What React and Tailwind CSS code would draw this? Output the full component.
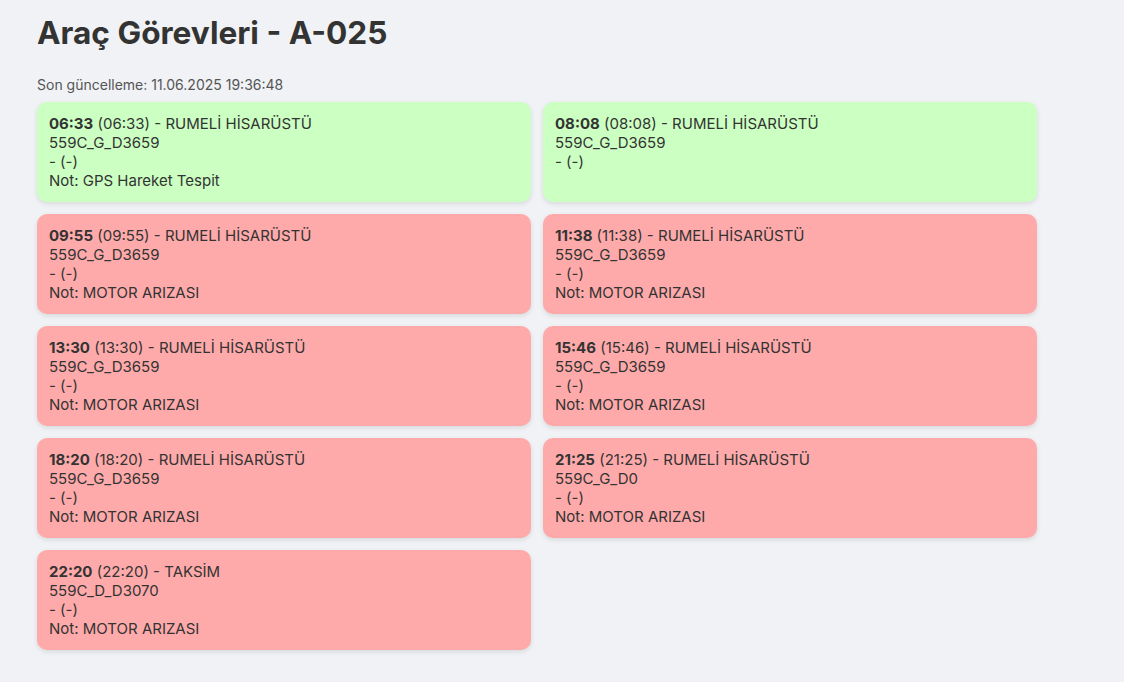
import React from "react";

const items = [
  { t: "06:33", place: "RUMELİ HİSARÜSTÜ", code: "559C_G_D3659", note: "GPS Hareket Tespit", ok: true },
  { t: "08:08", place: "RUMELİ HİSARÜSTÜ", code: "559C_G_D3659", note: null, ok: true },
  { t: "09:55", place: "RUMELİ HİSARÜSTÜ", code: "559C_G_D3659", note: "MOTOR ARIZASI" },
  { t: "11:38", place: "RUMELİ HİSARÜSTÜ", code: "559C_G_D3659", note: "MOTOR ARIZASI" },
  { t: "13:30", place: "RUMELİ HİSARÜSTÜ", code: "559C_G_D3659", note: "MOTOR ARIZASI" },
  { t: "15:46", place: "RUMELİ HİSARÜSTÜ", code: "559C_G_D3659", note: "MOTOR ARIZASI" },
  { t: "18:20", place: "RUMELİ HİSARÜSTÜ", code: "559C_G_D3659", note: "MOTOR ARIZASI" },
  { t: "21:25", place: "RUMELİ HİSARÜSTÜ", code: "559C_G_D0", note: "MOTOR ARIZASI" },
  { t: "22:20", place: "TAKSİM", code: "559C_D_D3070", note: "MOTOR ARIZASI" },
];

export default function App() {
  return (
    <div className="min-h-screen bg-[#f0f2f5] px-[37px] pt-[14px] pb-8 text-[#333]" style={{ fontFamily: "Inter, 'Noto Sans', sans-serif" }}>
      <h1 className="text-[31.6px] leading-[38px] font-bold text-[#333]">Araç Görevleri - A-025</h1>
      <p className="mt-[24px] text-[14px] leading-[18px] text-[#555]">Son güncelleme: 11.06.2025 19:36:48</p>
      <div className="mt-[8px] grid w-[1000px] grid-cols-2 gap-3">
        {items.map((it, i) => (
          <div
            key={i}
            className={`rounded-[10px] px-3 py-3 text-[15px] leading-[19px] shadow-[0_2px_5px_rgba(0,0,0,0.1)] ${it.ok ? "bg-[#ccffc2]" : "bg-[#ffaaaa]"}`}
          >
            <div>
              <span className="font-bold">{it.t}</span> ({it.t}) - {it.place}
            </div>
            <div>{it.code}</div>
            <div>- (-)</div>
            {it.note && <div>Not: {it.note}</div>}
          </div>
        ))}
      </div>
    </div>
  );
}
